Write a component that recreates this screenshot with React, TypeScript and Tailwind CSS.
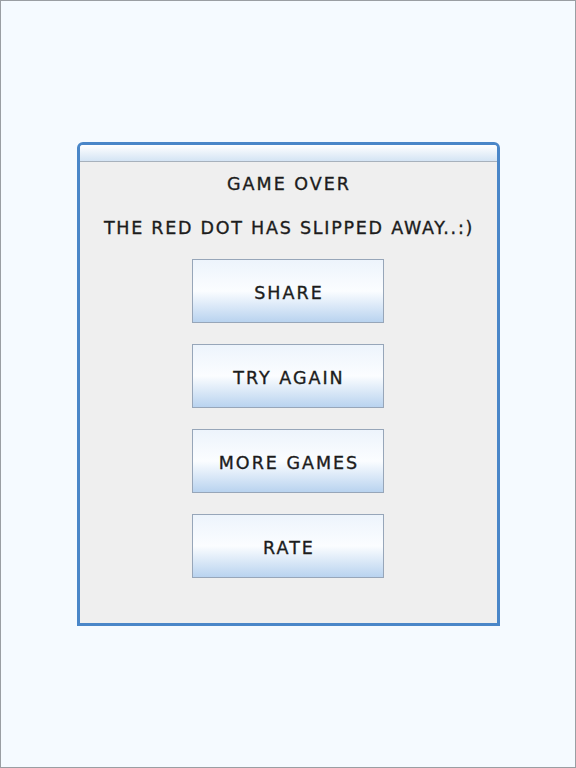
import React from "react";

const buttons = ["SHARE", "TRY AGAIN", "MORE GAMES", "RATE"];

export default function App() {
  return (
    <div
      className="w-[576px] h-[768px] bg-[#f5faff] border border-[#9a9ea3] flex items-center justify-center"
      style={{ fontFamily: '"DejaVu Sans", Verdana, sans-serif' }}
    >
      <div className="w-[423px] h-[484px] border-[3px] border-[#4a86c8] rounded-t-[6px] bg-[#efefef] flex flex-col overflow-hidden">
        <div className="h-[17px] shrink-0 bg-gradient-to-b from-[#ffffff] to-[#d4e4f4] border-b border-[#a7b1bc]" />
        <div className="flex flex-col items-center pt-[12px] text-[#1c1c1c] [-webkit-text-stroke:0.35px_#1c1c1c]">
          <div className="h-[20px] leading-[20px] text-[17.5px] tracking-[2px] pl-[2px]">
            GAME OVER
          </div>
          <div className="mt-[24px] h-[20px] leading-[20px] text-[17.5px] tracking-[1.75px] pl-[2px]">
            THE RED DOT HAS SLIPPED AWAY..:)
          </div>
          <div className="mt-[21px] flex flex-col gap-[21px]">
            {buttons.map((b) => (
              <button
                key={b}
                className="w-[192px] h-[64px] border border-[#97a6b9] bg-gradient-to-b from-[#edf4fc] via-[#fbfdff] to-[#b9d3ef] text-[17.5px] tracking-[2px] pl-[2px] pt-[4px] flex items-center justify-center"
              >
                {b}
              </button>
            ))}
          </div>
        </div>
      </div>
    </div>
  );
}
